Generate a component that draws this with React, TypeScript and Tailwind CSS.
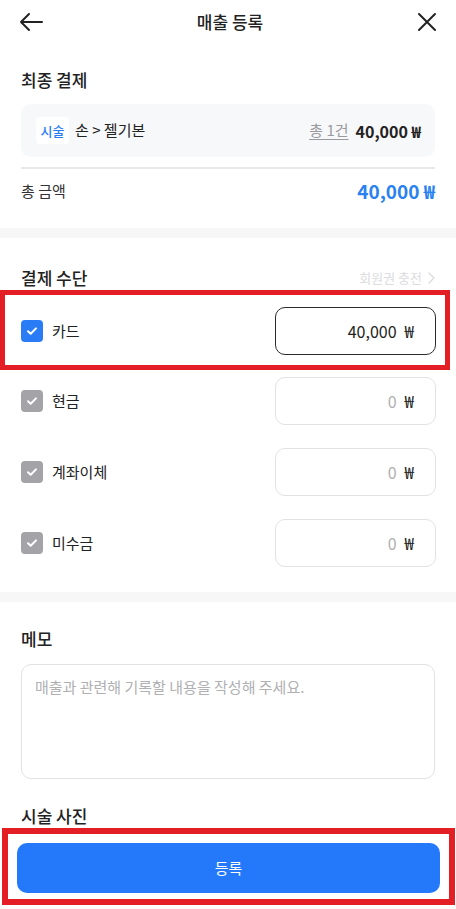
import React from 'react';

const FONT = { fontFamily: '"Noto Sans CJK KR", "Noto Sans", sans-serif' };

function Check({ on }: { on: boolean }) {
  return (
    <span
      className={`flex h-[22px] w-[22px] shrink-0 items-center justify-center rounded-[4px] ${
        on ? 'bg-[#2a7cf6]' : 'bg-[#a4a4a8]'
      }`}
    >
      <svg width="14" height="14" viewBox="0 0 14 14" fill="none">
        <path d="M3 7.2l2.7 2.6L11 4.4" stroke="white" strokeWidth="2" strokeLinecap="round" strokeLinejoin="round" />
      </svg>
    </span>
  );
}

function PayRow({ label, amount, on }: { label: string; amount: string; on: boolean }) {
  return (
    <div className="flex h-[48px] items-center">
      <Check on={on} />
      <span className="ml-[9px] flex-1 text-[15px] text-[#222]">{label}</span>
      <div
        className={`flex h-[48px] w-[161px] items-center justify-end rounded-[10px] border bg-white pr-[21px] text-[16px] ${
          on ? 'border-[#2b2b2b] border-[1.5px]' : 'border-[#e2e2e4]'
        }`}
      >
        <span className={on ? 'text-[#222]' : 'text-[#b0b0b0]'}>{amount}</span>
        <span className="ml-[8px] text-[17px] text-[#222]">₩</span>
      </div>
    </div>
  );
}

export default function App() {
  return (
    <div className="flex h-[909px] w-[456px] flex-col overflow-hidden bg-white" style={FONT}>
      <div className="flex-1">
        {/* Header */}
        <header className="flex h-[44px] items-center justify-between px-[18px]">
          <svg width="26" height="22" viewBox="0 0 26 22" fill="none">
            <path d="M24 11H3M11 3L3 11l8 8" stroke="#222" strokeWidth="2" strokeLinecap="round" strokeLinejoin="round" />
          </svg>
          <h1 className="text-[17px] font-medium text-[#222]">매출 등록</h1>
          <svg width="22" height="22" viewBox="0 0 22 22" fill="none">
            <path d="M3 3l16 16M19 3L3 19" stroke="#222" strokeWidth="2" strokeLinecap="round" />
          </svg>
        </header>

        {/* Final payment */}
        <section className="px-[21px] pt-[24px] pb-[25px]">
          <h2 className="text-[17px] font-medium leading-[24px] text-[#222]">최종 결제</h2>
          <div className="mt-[12px] flex h-[53px] items-center rounded-[10px] bg-[#f7f8fa] pl-[15px] pr-[14px]">
            <span className="flex h-[27px] w-[33px] items-center justify-center rounded-[4px] bg-white text-[13px] font-medium text-[#2a7cf6]">
              시술
            </span>
            <span className="ml-[6px] flex-1 text-[15px] text-[#222]">손 &gt; 젤기본</span>
            <span className="text-[15px] text-[#9a9a9e] underline underline-offset-[3px]">총 1건</span>
            <span className="ml-[7px] text-[16px] font-bold text-[#222]">40,000 ₩</span>
          </div>
          <div className="mt-[10px] h-[2px] bg-[#e8e8ea]" />
          <div className="mt-[10px] flex h-[24px] items-center justify-between">
            <span className="text-[15px] text-[#333]">총 금액</span>
            <span className="text-[19px] font-bold text-[#2a82f0]">40,000 ₩</span>
          </div>
        </section>

        <div className="h-[10px] bg-[#f7f7f8]" />

        {/* Payment method */}
        <section className="pt-[28px] pb-[25px]">
          <div className="flex h-[24px] items-center justify-between px-[21px]">
            <h2 className="text-[17px] font-medium text-[#222]">결제 수단</h2>
            <span className="flex items-center text-[13px] text-[#dcdcdf]">
              회원권 충전
              <svg className="ml-[6px]" width="7" height="12" viewBox="0 0 7 12" fill="none">
                <path d="M1 1l5 5-5 5" stroke="#dcdcdf" strokeWidth="1.3" strokeLinecap="round" strokeLinejoin="round" />
              </svg>
            </span>
          </div>
          <div className="w-[450px] border-[5px] border-[#e31e24] pl-[16px] pr-[9px] pt-[12px] pb-[10px]">
            <PayRow label="카드" amount="40,000" on />
          </div>
          <div className="flex flex-col gap-[23px] px-[21px] pt-[7px] pr-[20px]">
            <PayRow label="현금" amount="0" on={false} />
            <PayRow label="계좌이체" amount="0" on={false} />
            <PayRow label="미수금" amount="0" on={false} />
          </div>
        </section>

        <div className="h-[10px] bg-[#f7f7f8]" />

        {/* Memo */}
        <section className="px-[21px] pt-[25px]">
          <h2 className="text-[17px] font-medium leading-[24px] text-[#222]">메모</h2>
          <div className="mt-[13px] h-[115px] rounded-[10px] border border-[#e2e2e4] px-[13px] py-[11px] text-[15px] text-[#b0b0b3]">
            매출과 관련해 기록할 내용을 작성해 주세요.
          </div>
          <h2 className="mt-[27px] text-[17px] font-medium leading-[20px] text-[#222]">시술 사진</h2>
        </section>
      </div>

      {/* Bottom action */}
      <div className="bg-white pb-[4px] pl-[2px] pr-[1px]">
        <div className="border-[6px] border-[#e31e24] pl-[9px] pr-[9px] pt-[9px] pb-[6px]">
          <button className="flex h-[50px] w-full items-center justify-center rounded-[10px] bg-[#2479fb] text-[15px] text-white">
            등록
          </button>
        </div>
      </div>
    </div>
  );
}
